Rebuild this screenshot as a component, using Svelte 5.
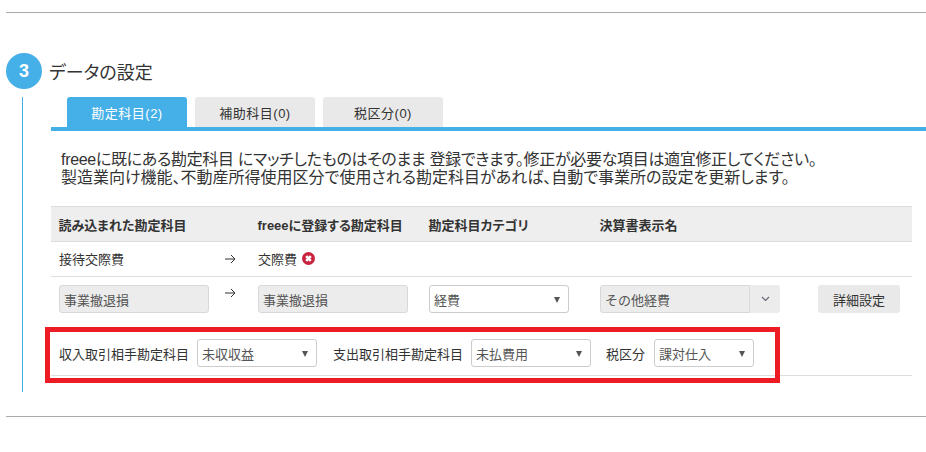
<script>
  const tabs = [
    { label: "勘定科目", count: 2, active: true },
    { label: "補助科目", count: 0 },
    { label: "税区分", count: 0 }
  ];

  const partners = [
    { label: "収入取引相手勘定科目", value: "未収収益", width: 120 },
    { label: "支出取引相手勘定科目", value: "未払費用", width: 120 },
    { label: "税区分", value: "課対仕入", width: 100 }
  ];
</script>

<main class="page">
  <hr class="rule" />

  <section class="step">
    <header class="step-head">
      <span class="num">3</span>
      <h2>データの設定</h2>
    </header>

    <div class="step-body">
      <nav class="tabs">
        {#each tabs as tab}
          <button class="tab" class:active={tab.active}>{tab.label}({tab.count})</button>
        {/each}
      </nav>

      <p class="lead">
        <span class="tight">freeeに既にある勘定科目 にマッチしたものはそのまま 登録できます。修正が必要な項目は適宜修正してください。</span><br />
        製造業向け機能、不動産所得使用区分で使用される勘定科目があれば、自動で事業所の設定を更新します。
      </p>

      <div class="table">
        <div class="row head">
          <span>読み込まれた勘定科目</span>
          <span>freeeに登録する勘定科目</span>
          <span>勘定科目カテゴリ</span>
          <span>決算書表示名</span>
        </div>

        <div class="row plain">
          <span class="arrow-cell">
            接待交際費
            {@render arrow()}
          </span>
          <span class="matched">
            交際費
            <svg class="remove" width="13" height="13" viewBox="0 0 13 13">
              <circle cx="6.5" cy="6.5" r="6.5" fill="#c9243f" />
              <path d="M4.2 4.2l4.6 4.6M8.8 4.2l-4.6 4.6" stroke="#fff" stroke-width="2.6" />
            </svg>
          </span>
          <span></span>
          <span></span>
        </div>

        <div class="row inputs">
          <span class="arrow-cell top">
            <input class="field" value="事業撤退損" disabled />
            {@render arrow()}
          </span>
          <span><input class="field" value="事業撤退損" disabled /></span>
          <span>
            <span class="select cat">経費<i></i></span>
          </span>
          <span class="combo">
            <input class="field" value="その他経費" disabled />
            <span class="combo-btn">
              <svg width="9" height="6" viewBox="0 0 9 6">
                <path d="M1 1l3.5 3.5L8 1" fill="none" stroke="#667" stroke-width="1.2" />
              </svg>
            </span>
          </span>
          <span><button class="detail">詳細設定</button></span>
        </div>

        <div class="partners">
          {#each partners as p}
            <label>
              {p.label}
              <span class="select" style="width: {p.width}px">{p.value}<i></i></span>
            </label>
          {/each}
        </div>

        <div class="highlight"></div>
      </div>
    </div>
  </section>

  <hr class="rule bottom" />
</main>

{#snippet arrow()}
  <svg class="arrow" width="11" height="10" viewBox="0 0 11 10">
    <path d="M0 5h10M6 1l4 4-4 4" fill="none" stroke="#333" stroke-width="1" />
  </svg>
{/snippet}

<style>
  :global(body) { margin: 0; background: #fff; }

  .page {
    width: 926px;
    height: 452px;
    padding-top: 12px;
    box-sizing: border-box;
    overflow: hidden;
    color: #333;
    font-family: "Liberation Sans", "Noto Sans CJK JP", sans-serif;
    font-size: 13px;
  }

  .rule { margin: 0 0 0 6px; border: 0; border-top: 1px solid #aaa; }
  .rule.bottom { margin-top: 24px; }

  .step { margin: 40px 0 0 6px; }
  .step-head { display: flex; align-items: center; gap: 7px; height: 36px; }
  .num {
    width: 36px;
    height: 36px;
    border-radius: 50%;
    background: #45b0e8;
    color: #fff;
    font-size: 18px;
    font-weight: 700;
    display: flex;
    align-items: center;
    justify-content: center;
  }
  h2 {
    margin: 0;
    font-size: 18px;
    font-weight: 400;
    color: #333;
    font-feature-settings: "palt";
  }

  .step-body {
    margin: 8px 14px 0 16px;
    padding-left: 28px;
    border-left: 1px solid #45b0e8;
    height: 295px;
  }

  .tabs {
    display: flex;
    gap: 8px;
    padding-left: 16px;
    border-bottom: 4px solid #45b0e8;
    margin-right: -14px;
  }
  .tab {
    width: 120px;
    height: 30px;
    border: 0;
    padding: 0;
    border-radius: 3px 3px 0 0;
    background: #e9e9e9;
    color: #333;
    font: inherit;
    font-size: 13px;
    letter-spacing: .5px;
  }
  .tab.active { background: #45b0e8; color: #fff; }

  .lead {
    margin: 20px 0 19px 10px;
    font-size: 16px;
    line-height: 18px;
    white-space: nowrap;
    color: #333;
    font-feature-settings: "palt";
  }
  .tight { letter-spacing: -.32px; }

  .table { position: relative; width: 861px; }

  .row {
    display: grid;
    grid-template-columns: 199px 171px 171px 218px 102px;
    box-sizing: border-box;
    border-bottom: 1px solid #ddd;
  }
  .row > span { padding-left: 8px; display: flex; align-items: center; }

  .head {
    height: 36px;
    background: #eee;
    border-top: 1px solid #ddd;
    font-weight: 700;
    white-space: nowrap;
    color: #333;
    font-feature-settings: "palt";
  }
  .head > span { padding-left: 7.5px; }
  .plain { height: 35px; }
  .plain > span { padding-bottom: 2px; }
  .inputs { height: 50px; border-bottom: 0; }
  .inputs > span { align-items: flex-start; padding-top: 8px; }

  .arrow-cell { position: relative; }
  .arrow { position: absolute; left: 174px; top: 12px; }
  .top .arrow { top: 11px; }

  .matched { gap: 5px; }

  .field {
    width: 150px;
    height: 28px;
    box-sizing: border-box;
    padding: 0 4px;
    border: 1px solid #d8d8d8;
    border-radius: 3px;
    background: #ececec;
    color: #555;
    font: inherit;
  }

  .combo-btn {
    width: 30px;
    height: 28px;
    background: #ececec;
    border-radius: 0 3px 3px 0;
    display: flex;
    align-items: center;
    justify-content: center;
  }
  .combo .field { border-radius: 3px 0 0 3px; }

  .detail {
    width: 82px;
    height: 28px;
    border: 0;
    border-radius: 3px;
    background: #e9e9e9;
    color: #333;
    font: inherit;
  }

  .select {
    height: 28px;
    box-sizing: border-box;
    padding-left: 4px;
    border: 1px solid #ccc;
    border-radius: 3px;
    background: #fff;
    color: #555;
    display: inline-flex;
    align-items: center;
    position: relative;
  }
  .select.cat { width: 140px; }
  .select i {
    position: absolute;
    right: 8px;
    top: 11px;
    border-left: 3px solid transparent;
    border-right: 3px solid transparent;
    border-top: 6px solid #555;
  }

  .partners {
    height: 49px;
    padding: 4px 0 0 8px;
    box-sizing: border-box;
    border-bottom: 1px solid #ddd;
    display: flex;
    align-items: center;
    gap: 16px;
    white-space: nowrap;
  }
  .partners label { display: flex; align-items: center; gap: 8px; }
  .partners label:last-of-type { margin-left: -1px; gap: 9px; }

  /* 強調枠 */
  .highlight {
    position: absolute;
    left: -6px;
    top: 121px;
    width: 735px;
    height: 56px;
    box-sizing: border-box;
    border: 5px solid #ed1c24;
    pointer-events: none;
  }
</style>
